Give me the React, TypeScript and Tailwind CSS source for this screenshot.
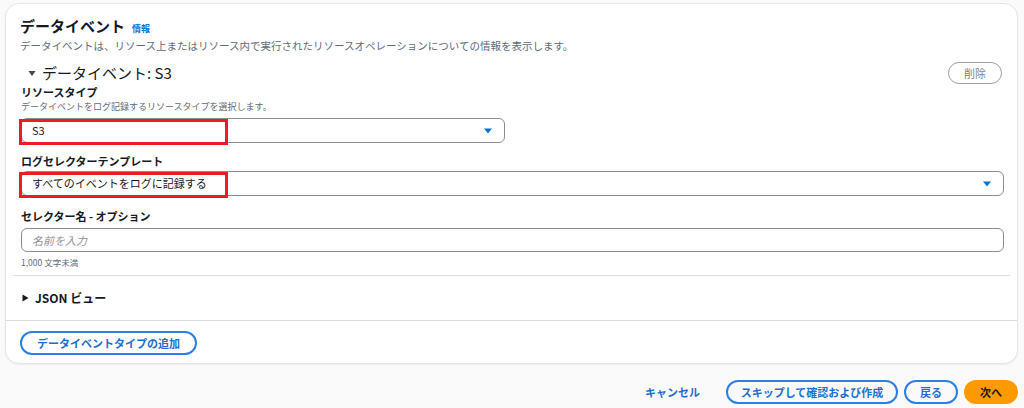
const FONT = { fontFamily: '"Noto Sans CJK JP", "Noto Sans", sans-serif' };

function Caret() {
  return (
    <svg width="10" height="8" viewBox="0 0 10 8" className="shrink-0">
      <path d="M1 1.5h8L5 6.5z" fill="#0972d3" />
    </svg>
  );
}

function Select({ value, width, boxWidth }: { value: string; width: string; boxWidth: string }) {
  return (
    <div className={`relative ${width}`}>
      <div className="h-[25px] border border-[#8c8c94] rounded-[6px] flex items-center justify-between pl-[10px] pr-[11px] text-[11px] text-[#16191f] bg-white">
        <span>{value}</span>
        <Caret />
      </div>
      {/* annotation frame */}
      <div className={`absolute left-[-2px] top-[1px] h-[26px] ${boxWidth} border-[3px] border-[#ec1c24] pointer-events-none`} />
    </div>
  );
}

export default function App() {
  return (
    <div className="w-[1024px] h-[408px] bg-[#fafafa] overflow-hidden text-[#16191f]" style={FONT}>
      <div className="pt-[3px] pl-[5px] pr-[6px]">
        <div className="bg-white border border-[#e4e5e7] rounded-[14px] shadow-[0_1px_2px_rgba(0,0,0,0.06)]">
          <div className="px-[14px] pt-[12px]">
            <div className="flex items-baseline gap-[7px] h-[20px]">
              <h1 className="text-[15px] font-bold leading-[20px]">データイベント</h1>
              <span className="text-[9px] font-bold text-[#0972d3]">情報</span>
            </div>
            <p className="text-[10.5px] text-[#5f6b7a] leading-[16px] mt-[2px]">
              データイベントは、リソース上またはリソース内で実行されたリソースオペレーションについての情報を表示します。
            </p>

            <div className="flex items-center justify-between mt-[8px] pr-[1px]">
              <div className="flex items-center gap-[6px] pl-[8px]">
                <svg width="8" height="7" viewBox="0 0 8 7">
                  <path d="M0.5 1h7L4 6z" fill="#414750" />
                </svg>
                <span className="text-[15px] leading-[22px]">データイベント: S3</span>
              </div>
              <button className="w-[54px] h-[22px] rounded-full border-[1.5px] border-[#9ba0a6] text-[11px] text-[#7d8289] flex items-center justify-center">
                削除
              </button>
            </div>

            <div className="pl-[1px] mt-[1px]">
              <div className="text-[11px] font-bold leading-[14px]">リソースタイプ</div>
              <div className="text-[9px] text-[#5f6b7a] leading-[13px] mt-[1px]">データイベントをログ記録するリソースタイプを選択します。</div>
              <div className="mt-[5px]">
                <Select value="S3" width="w-[484px]" boxWidth="w-[209px]" />
              </div>

              <div className="text-[11px] font-bold leading-[14px] mt-[11px]">ログセレクターテンプレート</div>
              <div className="mt-[3px]">
                <Select value="すべてのイベントをログに記録する" width="w-[983px]" boxWidth="w-[209px]" />
              </div>

              <div className="text-[11px] font-bold leading-[14px] mt-[13px]">セレクター名 - オプション</div>
              <div className="mt-[5px] w-[983px] h-[24px] border border-[#8c8c94] rounded-[6px] flex items-center pl-[10px] text-[11px] italic text-[#8d9199]">
                名前を入力
              </div>
              <div className="text-[8.5px] text-[#5f6b7a] leading-[12px] mt-[4px]">1,000 文字未満</div>
            </div>

            <div className="border-t border-[#dcdcdf] mt-[7px] mx-[-7px]" />

            <div className="flex items-center gap-[6px] h-[44px] pl-[2px]">
              <svg width="7" height="8" viewBox="0 0 7 8">
                <path d="M0.5 0.5v7L6.5 4z" fill="#16191f" />
              </svg>
              <span className="text-[12px] font-bold">JSON ビュー</span>
            </div>
          </div>

          <div className="border-t border-[#dcdcdf]" />

          <div className="px-[14px] pt-[10px] pb-[8px]">
            <button className="h-[24px] px-[15px] rounded-full border-2 border-[#2d7fe0] text-[11px] font-bold text-[#1a6fd0] flex items-center">
              データイベントタイプの追加
            </button>
          </div>
        </div>
      </div>

      <div className="flex items-center justify-end pr-[6px] mt-[16px] gap-[6px]">
        <span className="text-[11px] font-bold text-[#1a6fd0] mr-[20px]">キャンセル</span>
        <button className="w-[172px] h-[24px] rounded-full border-2 border-[#2d7fe0] text-[11px] font-bold text-[#1a6fd0]">
          スキップして確認および作成
        </button>
        <button className="w-[54px] h-[24px] rounded-full border-2 border-[#2d7fe0] text-[11px] font-bold text-[#1a6fd0]">
          戻る
        </button>
        <button className="w-[54px] h-[24px] rounded-full bg-[#ff9900] text-[11px] font-bold text-[#16191f]">
          次へ
        </button>
      </div>
    </div>
  );
}
